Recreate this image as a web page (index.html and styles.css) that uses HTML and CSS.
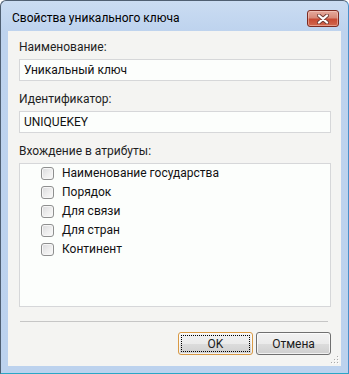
FILE: index.html
```html
<!DOCTYPE html>
<html lang="ru">
<head>
<meta charset="utf-8">
<title>Свойства уникального ключа</title>
<link rel="stylesheet" href="styles.css">
</head>
<body>
<div class="window">
  <div class="titlebar">
    <span class="title">Свойства уникального ключа</span>
    <div class="close">
      <svg width="12" height="10" viewBox="0 0 12 10">
        <path d="M2 1.5 L10 8.5 M10 1.5 L2 8.5" stroke="#6e3a33" stroke-width="4" stroke-linecap="round" fill="none"/>
        <path d="M2 1.5 L10 8.5 M10 1.5 L2 8.5" stroke="#ffffff" stroke-width="2.3" stroke-linecap="round" fill="none"/>
      </svg>
    </div>
  </div>
  <div class="client">
    <div class="field">
      <div class="label">Наименование:</div>
      <div class="input">Уникальный ключ</div>
    </div>
    <div class="field">
      <div class="label">Идентификатор:</div>
      <div class="input">UNIQUEKEY</div>
    </div>
    <div class="field">
      <div class="label">Вхождение в атрибуты:</div>
      <div class="listbox">
        <div class="item"><span class="cb"></span><span>Наименование государства</span></div>
        <div class="item"><span class="cb"></span><span>Порядок</span></div>
        <div class="item"><span class="cb"></span><span>Для связи</span></div>
        <div class="item"><span class="cb"></span><span>Для стран</span></div>
        <div class="item"><span class="cb"></span><span>Континент</span></div>
      </div>
    </div>
    <div class="sep"></div>
    <div class="buttons">
      <div class="btn btn-default"><span class="focus">OK</span></div>
      <div class="btn">Отмена</div>
    </div>
    <svg class="grip" width="9" height="9" viewBox="0 0 9 9">
      <rect x="7" y="1" width="1" height="1" fill="#a9a9a9"/>
      <rect x="4" y="4" width="1" height="1" fill="#a9a9a9"/>
      <rect x="7" y="4" width="1" height="1" fill="#a9a9a9"/>
      <rect x="1" y="7" width="1" height="1" fill="#a9a9a9"/>
      <rect x="4" y="7" width="1" height="1" fill="#a9a9a9"/>
      <rect x="7" y="7" width="1" height="1" fill="#a9a9a9"/>
      <rect x="8" y="2" width="1" height="1" fill="#ffffff"/>
      <rect x="5" y="5" width="1" height="1" fill="#ffffff"/>
      <rect x="8" y="5" width="1" height="1" fill="#ffffff"/>
      <rect x="2" y="8" width="1" height="1" fill="#ffffff"/>
      <rect x="5" y="8" width="1" height="1" fill="#ffffff"/>
      <rect x="8" y="8" width="1" height="1" fill="#ffffff"/>
    </svg>
  </div>
</div>
</body>
</html>
```

FILE: styles.css
```css
html, body {
  margin: 0;
  padding: 0;
  background: #ffffff;
}

body {
  font-family: Roboto, "Noto Sans", "Liberation Sans", sans-serif;
  font-size: 12px;
  color: #1b1b1b;
}

.window {
  width: 349px;
  height: 374px;
  box-sizing: border-box;
  border: 1px solid #4f5f72;
  border-right-color: #4a8fc9;
  border-bottom-color: #2aa7c6;
  border-radius: 6px 6px 0 0;
  background: linear-gradient(#cadcf2 0px, #bed3ee 30px, #bcd2ee 100%);
  display: flex;
  flex-direction: column;
}

.titlebar {
  height: 30px;
  display: flex;
  justify-content: space-between;
  align-items: flex-start;
  flex: none;
}

.title {
  padding: 9px 0 0 11px;
  line-height: 16px;
  color: #000000;
}

.close {
  margin: 9px 9px 0 0;
  width: 32px;
  height: 17px;
  box-sizing: border-box;
  border: 1px solid #7c2b22;
  border-radius: 3px;
  background: linear-gradient(#e5aa9d 0%, #d88a79 45%, #c84a33 55%, #d1684f 100%);
  box-shadow: inset 0 0 0 1px rgba(255, 220, 210, 0.45);
  display: flex;
  align-items: center;
  justify-content: center;
}

.close svg {
  display: block;
}

.client {
  flex: 1;
  margin: 0 7px 7px 7px;
  background: #f4f4f2;
  padding: 8px 10px 0 11px;
  display: flex;
  flex-direction: column;
  position: relative;
}

.field + .field {
  margin-top: 10px;
}

.label {
  line-height: 16px;
  margin-bottom: 4px;
  color: #1e1e1e;
}

.input {
  height: 22px;
  box-sizing: border-box;
  border: 1px solid #d6d7d9;
  background: #fcfefc;
  padding: 1px 4px 0 4px;
  line-height: 19px;
  color: #111111;
}

.listbox {
  height: 144px;
  box-sizing: border-box;
  border: 1px solid #d6d7d9;
  background: #fcfefc;
  padding: 0 0 0 21px;
}

.item {
  height: 19px;
  display: flex;
  align-items: center;
  gap: 8px;
  line-height: 19px;
  color: #111111;
}

.cb {
  width: 13px;
  height: 13px;
  box-sizing: border-box;
  border: 1px solid #8e8f8f;
  border-radius: 3px;
  background: linear-gradient(135deg, #d8d9db 0%, #eeeeee 55%, #fafafa 100%);
  box-shadow: inset 0 0 0 1px #f6f6f6;
  flex: none;
}

.sep {
  height: 1px;
  background: #c6c6c6;
  margin: 14px 3px 0 1px;
}

.buttons {
  display: flex;
  justify-content: flex-end;
  gap: 3px;
  margin-top: 10px;
}

.btn {
  width: 75px;
  height: 23px;
  box-sizing: border-box;
  border: 1px solid #707070;
  border-radius: 3px;
  background: linear-gradient(#f2f2f2 0%, #ebebeb 50%, #dddddd 50%, #cfcfcf 100%);
  box-shadow: inset 0 0 0 1px rgba(255, 255, 255, 0.7);
  display: flex;
  align-items: center;
  justify-content: center;
  line-height: 16px;
  color: #1b1b1b;
}

.btn-default {
  border-color: #d99a45;
  padding: 2px;
}

.focus {
  flex: 1;
  align-self: stretch;
  border: 1px dotted #000000;
  display: flex;
  align-items: center;
  justify-content: center;
}

.grip {
  position: absolute;
  right: 2px;
  bottom: 2px;
}
```
